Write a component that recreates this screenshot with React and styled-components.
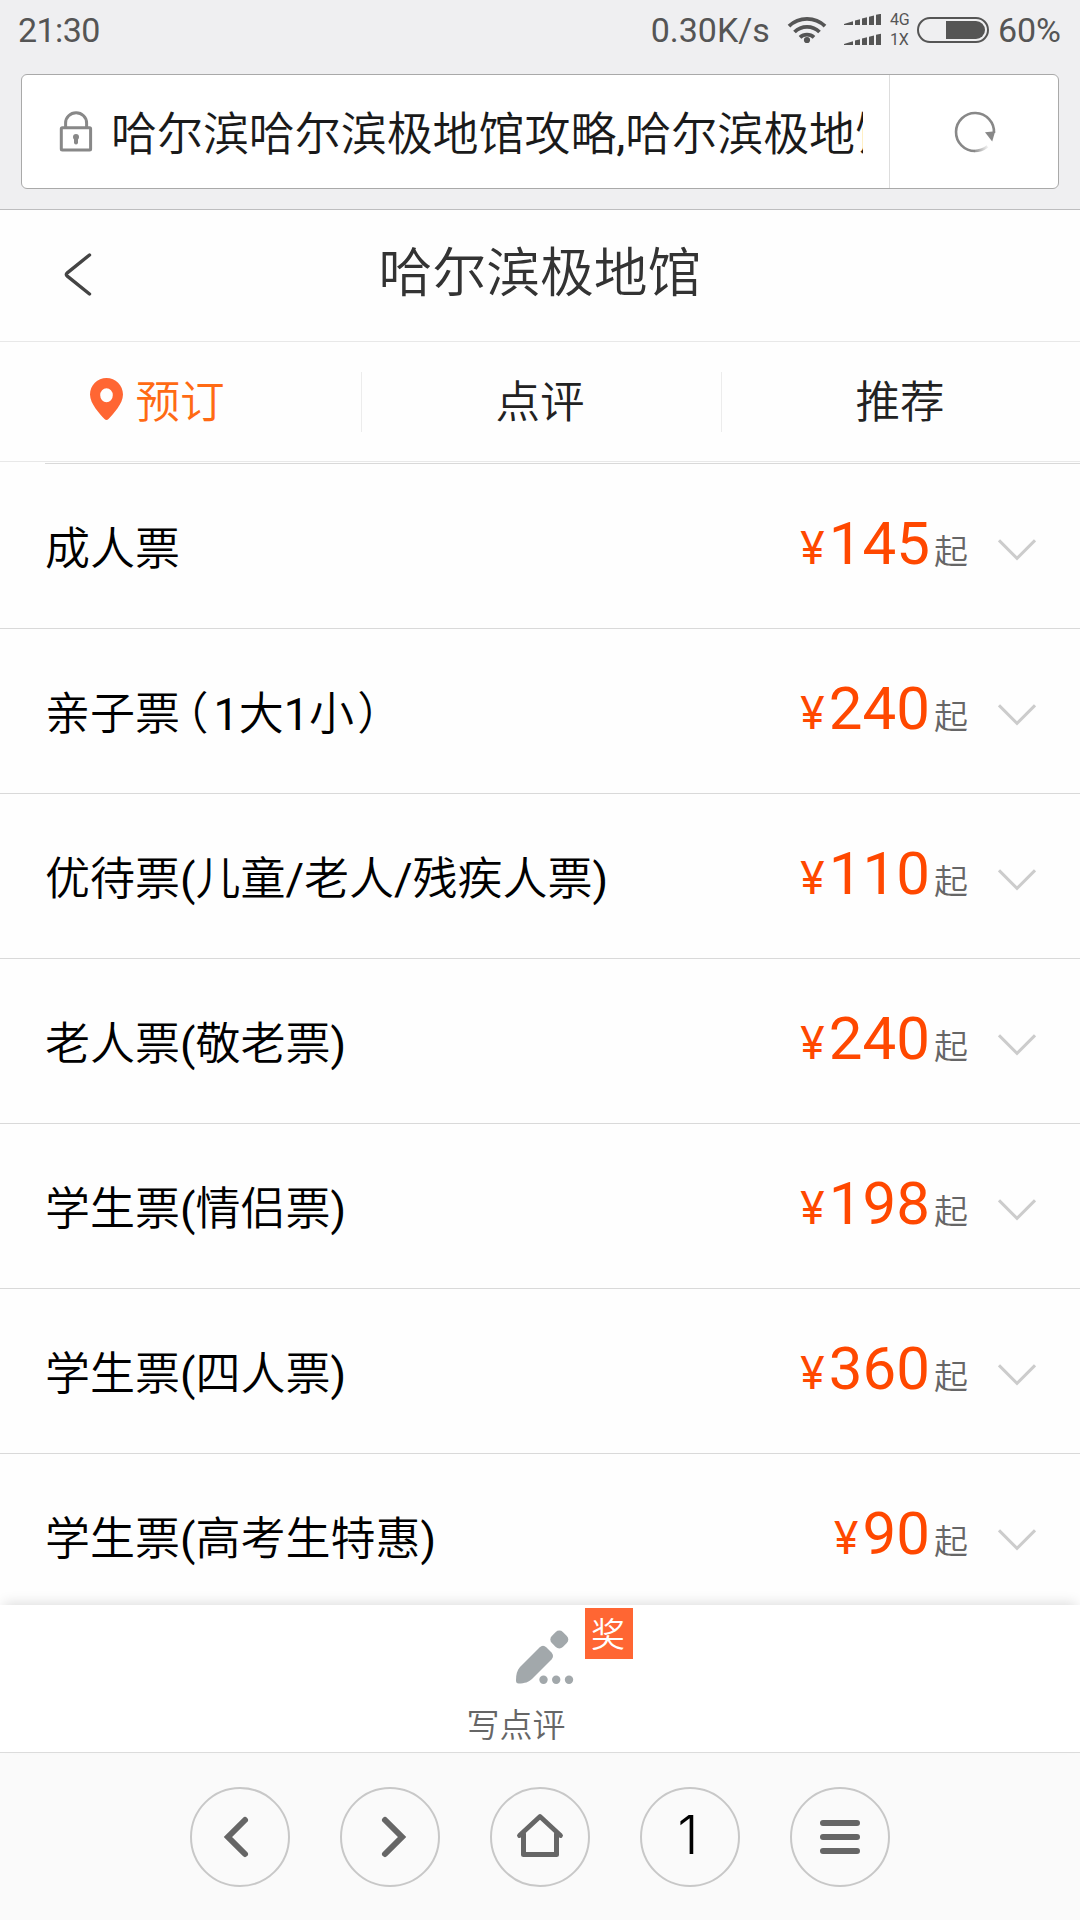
import styled, { createGlobalStyle } from "styled-components";

const tickets = [
  { name: "成人票", price: 145 },
  { name: "亲子票", note: "1大1小", price: 240 },
  { name: "优待票(儿童/老人/残疾人票)", price: 110 },
  { name: "老人票(敬老票)", price: 240 },
  { name: "学生票(情侣票)", price: 198 },
  { name: "学生票(四人票)", price: 360 },
  { name: "学生票(高考生特惠)", price: 90 },
];

const navItems = ["back", "forward", "home", "tabs", "menu"];

export default function App() {
  return (
    <Screen>
      <GlobalStyle />
      <BrowserTop>
        <StatusBar />
        <AddressBar>
          <LockIcon />
          <Url>哈尔滨哈尔滨极地馆攻略,哈尔滨极地馆</Url>
          <Reload>
            <ReloadIcon />
          </Reload>
        </AddressBar>
      </BrowserTop>
      <Header>
        <BackIcon />
        <Title>哈尔滨极地馆</Title>
      </Header>
      <Tabs>
        <Tab $active>
          <PinIcon />
          预订
        </Tab>
        <Tab>点评</Tab>
        <Tab>推荐</Tab>
      </Tabs>
      <TicketList>
        <ListTop />
        {tickets.map((ticket) => (
          <Ticket key={ticket.name} {...ticket} />
        ))}
      </TicketList>
      <ReviewBar>
        <ReviewButton>
          <PencilIcon />
          <ReviewLabel>写点评</ReviewLabel>
          <Badge>奖</Badge>
        </ReviewButton>
      </ReviewBar>
      <BottomNav>
        {navItems.map((item) => (
          <NavButton key={item}>
            <NavIcon name={item} />
          </NavButton>
        ))}
      </BottomNav>
    </Screen>
  );
}

function Ticket({ name, note, price }) {
  return (
    <TicketRow>
      <TicketName>
        {name}
        {note && (
          <>
            <Paren $left={6}>（</Paren>
            {note}
            <Paren $left={3}>）</Paren>
          </>
        )}
      </TicketName>
      <Price>
        <Yen>¥</Yen>
        <Amount>{price}</Amount>
        <From>起</From>
      </Price>
      <Chevron />
    </TicketRow>
  );
}

function StatusBar() {
  return (
    <Status>
      <Clock>21:30</Clock>
      <Speed>0.30K/s</Speed>
      <WifiIcon />
      <SignalIcon />
      <Networks>
        <span>4G</span>
        <span>1X</span>
      </Networks>
      <BatteryIcon />
      <Percent>60%</Percent>
    </Status>
  );
}

const Chevron = () => (
  <svg width="38" height="30" viewBox="0 0 38 30" fill="none">
    <path d="M1 9.3 19 27.3 37 9.3" stroke="#ccc" strokeWidth="3" />
  </svg>
);

const WifiIcon = () => (
  <svg width="40" height="30" viewBox="787 15 40 30" fill="none" stroke="#555" strokeWidth="3.8">
    <path d="M789 26.2a26 26 0 0 1 36 0" />
    <path d="M794.5 32a18 18 0 0 1 25 0" />
    <path d="M800 37.4a10.3 10.3 0 0 1 14 0" />
    <circle cx="807" cy="40" r="3.1" fill="#555" stroke="none" />
  </svg>
);

const SignalIcon = () => (
  <svg width="38" height="32" viewBox="844 14 38 32" fill="#555">
    {[0, 20].map((dy) => (
      <g key={dy} transform={`translate(0 ${dy})`}>
        <path d="M844 24l9-2.8v3.8h-9z" />
        <path d="M855 20.6l5-1.4v5.8h-5z" />
        <path d="M862 18.6l5-1.4v7.8h-5z" />
        <path d="M869 16.8l5-1.4v9.6h-5z" />
        <path d="M876 14.8l5-1v11.2h-5z" />
      </g>
    ))}
  </svg>
);

const BatteryIcon = () => (
  <svg width="72" height="26" viewBox="0 0 72 26">
    <rect x="1" y="1" width="70" height="24" rx="12" fill="none" stroke="#555" strokeWidth="2" />
    <path d="M29 4h30a9 9 0 0 1 0 18H29z" fill="#555" />
  </svg>
);

const LockIcon = () => (
  <svg width="34" height="42" viewBox="59 110 34 42" fill="none" stroke="#888" strokeWidth="3">
    <rect x="61.3" y="126.8" width="29.3" height="22.2" rx="1" />
    <path d="M65.6 126.500v-4.5a10.5 10.2 0 0 1 21 0v4.5" />
    <path d="M76 136.5v5" strokeWidth="4" strokeLinecap="round" />
    <circle cx="76" cy="136.1" r="3" fill="#888" stroke="none" />
  </svg>
);

const ReloadIcon = () => (
  <svg width="42" height="42" viewBox="954 111 42 42" fill="none">
    <defs>
      <linearGradient id="fade" gradientUnits="userSpaceOnUse" x1="973" y1="150" x2="988" y2="147">
        <stop offset="0" stopColor="#888" />
        <stop offset="1" stopColor="#888" stopOpacity="0.1" />
      </linearGradient>
    </defs>
    <path d="M994 133A19 19 0 1 0 975 151" stroke="#888" strokeWidth="2.6" />
    <path d="M974.5 151c5 0 9-1.6 13-4.6" stroke="url(#fade)" strokeWidth="2.6" />
    <path d="M985 132.2l10.2-1-3 10.2z" fill="#888" />
  </svg>
);

const BackIcon = () => (
  <svg width="30" height="46" viewBox="0 0 30 46" fill="none">
    <path
      d="M25.5 2 3.3 19.8q-2 1.7 0 3.4L25.5 41"
      stroke="#444"
      strokeWidth="3.4"
      strokeLinecap="round"
    />
  </svg>
);

const PinIcon = () => (
  <svg width="33" height="42" viewBox="0 0 33 42">
    <path
      fill="#ff6633"
      fillRule="evenodd"
      d="M16.5 0C7.5 0 0 7.4 0 16.5 0 26 10 36 14.5 41q2 2 4 0C23 36 33 26 33 16.5 33 7.4 25.5 0 16.5 0Zm0 10.2a6.3 7 0 1 1 0 14 6.3 7 0 0 1 0-14Z"
    />
  </svg>
);

const PencilIcon = () => (
  <svg width="58" height="54" viewBox="516 1630 58 54" fill="#a2a8ab">
    <path d="M516 1680.5c0-6 1-10 4-13.5l19.5-19.5q3.5-3.5 7 0l5 5q3 3.5 0 7L532 1679c-3.5 3-7 4.5-13.5 4.5q-2.5 0-2.5-3Z" />
    <rect x="551.5" y="1631.7" width="15.6" height="15.6" rx="5" transform="rotate(45 559.3 1639.5)" />
    <circle cx="543.5" cy="1679.7" r="4.2" />
    <circle cx="556.2" cy="1679.7" r="4.2" />
    <circle cx="569" cy="1679.7" r="4.2" />
  </svg>
);

// All nav drawings share a 96px box centred in their circle
function NavIcon({ name }) {
  if (name === "tabs") {
    return <TabCount>1</TabCount>;
  }

  return (
    <svg width="96" height="96" viewBox="-48 -48 96 96" fill="none" stroke="#666" strokeLinecap="round">
      {name === "back" && <path d="M5-17-12 0 5 17" strokeWidth="6" />}
      {name === "forward" && <path d="M-5-17 12 0-5 17" strokeWidth="6" />}
      {name === "home" && (
        <>
          <path d="M-20.5-1.5 0-20.5 20.5-1.5" strokeWidth="4.8" strokeLinejoin="round" />
          <path d="M-16.5-3V17.5H16.5V-3" strokeWidth="5" strokeLinejoin="round" />
        </>
      )}
      {name === "menu" && <path d="M-17-14H17M-17 0H17M-17 14H17" strokeWidth="6" />}
    </svg>
  );
}

const GlobalStyle = createGlobalStyle`
  * {
    box-sizing: border-box;
  }

  body {
    margin: 0;
    font-family: Roboto, "Noto Sans CJK SC DemiLight", "Noto Sans CJK SC", sans-serif;
  }

  svg {
    display: block;
    flex-shrink: 0;
  }
`;

const Screen = styled.div`
  width: 1080px;
  height: 1920px;
  display: flex;
  flex-direction: column;
  background: #fefefe;
  overflow: hidden;
`;

const BrowserTop = styled.div`
  height: 210px;
  flex-shrink: 0;
  padding: 0 21px;
  background: #efeff1;
  border-bottom: 1px solid #bdbdbf;
`;

const Status = styled.div`
  height: 74px;
  padding: 0 0 14px;
  margin: 0 -2px 0 -3px;
  display: flex;
  align-items: center;
  color: #555;
  font-size: 34px;
`;

const Clock = styled.span`
  flex: 1;
  letter-spacing: -0.6px;
`;

const Speed = styled.span`
  margin-right: 17px;

  & + svg {
    margin-right: 17px;
  }
`;

const Percent = styled.span`
  margin-left: 9px;
`;

const Networks = styled.span`
  width: 27px;
  margin-left: 8px;
  display: flex;
  flex-direction: column;
  font-size: 16px;
  line-height: 20px;
`;

const AddressBar = styled.div`
  height: 115px;
  padding-left: 37px;
  display: flex;
  align-items: center;
  background: #fff;
  border: 1px solid #a9a9a9;
  border-radius: 6px;
`;

const Url = styled.div`
  width: 752px;
  margin: 0 26px 0 18px;
  padding-bottom: 4px;
  overflow: hidden;
  white-space: nowrap;
  color: #1a1a1a;
  font-size: 46px;
  letter-spacing: -0.06px;
`;

const Reload = styled.div`
  flex: 1;
  align-self: stretch;
  padding-left: 2px;
  display: flex;
  align-items: center;
  justify-content: center;
  border-left: 1px solid #ddd;
`;

const Header = styled.div`
  height: 132px;
  flex-shrink: 0;
  padding: 0 64px;
  display: flex;
  align-items: center;
  border-bottom: 1px solid #e8e8e8;
`;

const Title = styled.h1`
  flex: 1;
  margin: 0 30px 0 0;
  padding-bottom: 15px;
  text-align: center;
  color: #333;
  font-size: 53.8px;
  font-weight: 400;
`;

const Tabs = styled.div`
  height: 120px;
  flex-shrink: 0;
  display: flex;
  align-items: center;
  border-bottom: 1px solid #e8e8e8;
`;

const Tab = styled.div`
  width: 360px;
  height: 60px;
  padding: 0 ${({ $active }) => ($active ? "46px" : "2px")} 6px 0;
  display: flex;
  align-items: center;
  justify-content: center;
  gap: 12px;
  color: ${({ $active }) => ($active ? "#ff6a14" : "#222")};
  font-size: 44.6px;

  &:not(:last-child) {
    width: 361px;
    border-right: 1px solid #ececec;
  }

  &:first-child {
    width: 362px;
    margin-right: -1px;
  }

  & + & {
    margin-right: -1px;
  }
`;

const TicketList = styled.div`
  flex: 1;
  min-height: 0;
  overflow: hidden;
`;

const ListTop = styled.div`
  height: 2px;
  margin-left: 45px;
  border-bottom: 1px solid #d9d9d9;
`;

const TicketRow = styled.div`
  height: 165px;
  padding: 0 44px 0 45px;
  display: flex;
  align-items: center;
  border-bottom: 1px solid #d9d9d9;
`;

const TicketName = styled.div`
  flex: 1;
  padding-bottom: 2px;
  color: #000;
  font-size: 45px;
`;

// Half-width punctuation, eased back out a little
const Paren = styled.span`
  margin: 0 5px 0 ${({ $left }) => $left}px;
  font-feature-settings: "halt";
`;

const Price = styled.div`
  margin-right: 30px;
  padding-top: 4px;
  display: flex;
  align-items: baseline;
  line-height: 70px;
`;

const Yen = styled.span`
  margin-right: 4px;
  color: #ff4800;
  font-family: Inter, sans-serif;
  font-size: 45px;
`;

const Amount = styled.span`
  color: #ff4800;
  font-size: 60px;
`;

const From = styled.span`
  margin-left: 4px;
  color: #666;
  font-size: 34px;
`;

const ReviewBar = styled.div`
  height: 148px;
  flex-shrink: 0;
  display: flex;
  justify-content: center;
  background: #fff;
  border-bottom: 1px solid #dcdcdc;
  box-shadow: 0 -6px 12px -4px rgba(0, 0, 0, 0.13);
  z-index: 1;
`;

const ReviewButton = styled.div`
  position: relative;
  width: 148px;
  padding-top: 25px;
  display: flex;
  flex-direction: column;
  align-items: center;

  svg {
    margin-left: 10px;
  }
`;

const ReviewLabel = styled.span`
  margin: 18px 48px 0 0;
  color: #666;
  font-size: 33px;
  line-height: 48px;
  white-space: nowrap;
`;

const Badge = styled.span`
  position: absolute;
  top: 3px;
  left: 119px;
  width: 48px;
  height: 51px;
  padding: 2px 2px 0 0;
  background: #ff6633;
  color: #fff;
  font-size: 34px;
  line-height: 51px;
  text-align: center;
`;

const BottomNav = styled.div`
  height: 167px;
  flex-shrink: 0;
  display: flex;
  align-items: center;
  justify-content: center;
  gap: 50px;
  background: #fafafa;
`;

const NavButton = styled.div`
  width: 100px;
  height: 100px;
  display: flex;
  align-items: center;
  justify-content: center;
  border: 2px solid #c8c8c8;
  border-radius: 50%;
`;

const TabCount = styled.span`
  padding: 0 4px 3px 0;
  color: #000;
  font-family: Inter, sans-serif;
  font-size: 53px;
  font-weight: 300;
  line-height: 54px;
`;
